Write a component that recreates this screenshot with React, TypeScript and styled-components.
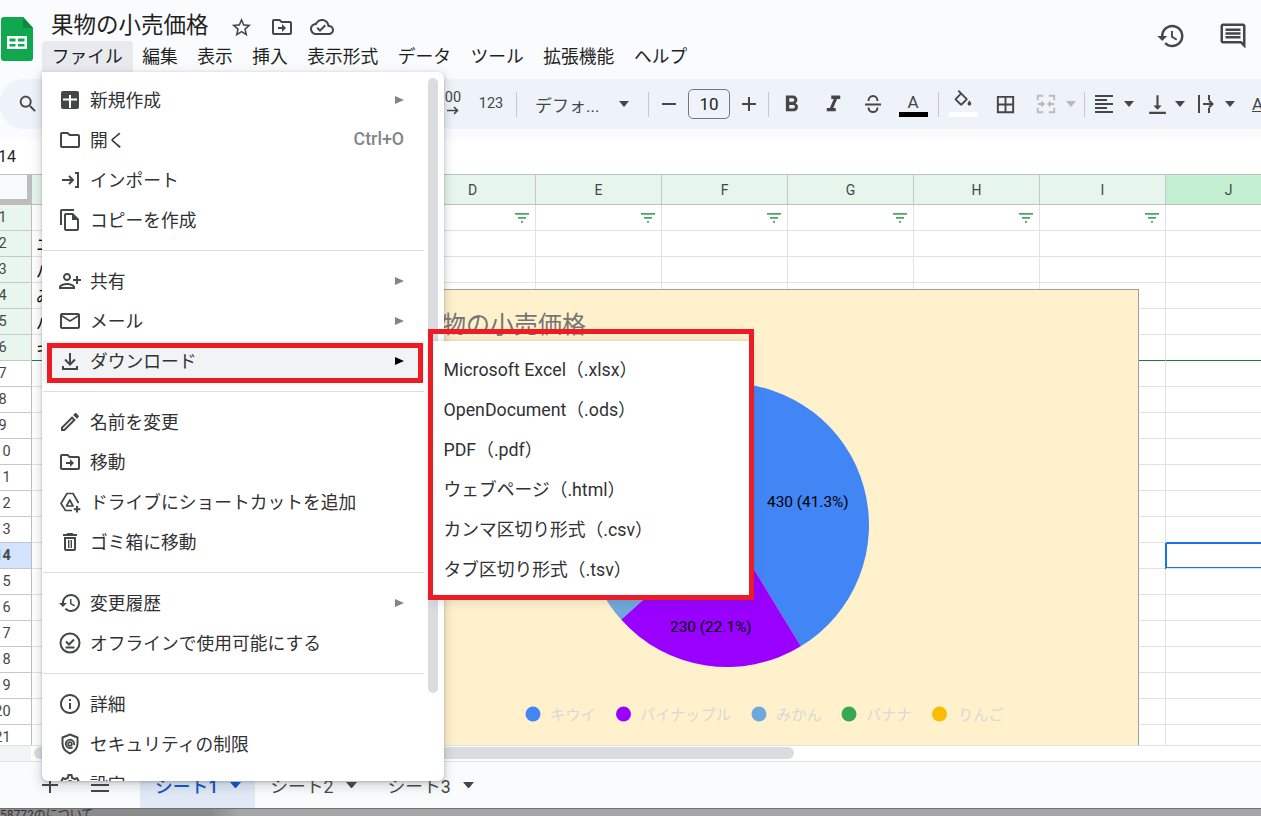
import React from 'react';
import styled, { createGlobalStyle } from 'styled-components';
import { MdFormatBold, MdFormatItalic, MdOutlineSettings } from 'react-icons/md';

const UI_FONT = `Roboto, "Noto Sans CJK JP", sans-serif`;

const Global = createGlobalStyle`
  html, body { margin: 0; padding: 0; background: #f9fbfd; overflow: hidden; }
  #root { width: 1261px; height: 816px; }
  * { box-sizing: border-box; }
`;

const Page = styled.div`
  position: relative;
  width: 1261px;
  height: 816px;
  overflow: hidden;
  display: flex;
  flex-direction: column;
  background: #f9fbfd;
  font-family: ${UI_FONT};
  color: #1f1f1f;
`;

const Header = styled.header`
  height: 79px;
  flex: none;
  display: flex;
`;
const LogoBox = styled.div`
  width: 42px;
  flex: none;
  padding: 17px 0 0 1px;
`;
const HeaderMain = styled.div`
  display: flex;
  flex-direction: column;
`;
const TitleRow = styled.div`
  height: 41px;
  padding: 9px 0 0 9px;
  display: flex;
  align-items: center;
`;
const DocTitle = styled.div`
  font-size: 22.5px;
  line-height: 30px;
  white-space: nowrap;
  margin-right: 13px;
`;
const TitleIcon = styled.span`
  width: 40px;
  height: 26px;
  margin-top: 4px;
  display: flex;
  align-items: center;
  justify-content: center;
  color: #444746;
`;
const MenuBar = styled.nav`
  height: 31px;
  display: flex;
`;
const MenuBarItem = styled.div<{ $open?: boolean }>`
  padding: 0 9.75px;
  font-size: 17.75px;
  line-height: 32px;
  white-space: nowrap;
  border-radius: 4px 4px 0 0;
  background: ${(p) => (p.$open ? '#e8eaed' : 'transparent')};
`;
const HeaderActions = styled.div`
  margin-left: auto;
  padding: 21px 13px 0 0;
  display: flex;
  gap: 32px;
  color: #444746;
`;

const Toolbar = styled.div`
  height: 50px;
  flex: none;
  display: flex;
  align-items: center;
  background: #eef2f9;
  border-radius: 24px 0 0 24px;
  color: #444746;
`;
const Slot = styled.div<{ $w: number; $muted?: boolean }>`
  width: ${(p) => p.$w}px;
  flex: none;
  display: flex;
  align-items: center;
  justify-content: center;
  color: ${(p) => (p.$muted ? '#b9babc' : '#444746')};
`;
const Sep = styled.div`
  width: 1px;
  height: 25px;
  flex: none;
  background: #c7c7c7;
`;
const ToolText = styled.span<{ $size?: number }>`
  font-size: ${(p) => p.$size ?? 14.5}px;
  line-height: 1;
  white-space: nowrap;
`;
const DecimalStack = styled.div`
  display: flex;
  flex-direction: column;
  align-items: center;
  line-height: 13px;
  margin-top: -2px;
`;
const FontPicker = styled.div`
  width: 131px;
  flex: none;
  padding-left: 18px;
  display: flex;
  align-items: center;
  font-size: 17px;
  color: #444746;
`;
const FontName = styled.span`
  width: 84px;
  white-space: nowrap;
`;
const SizeBox = styled.div`
  width: 42px;
  height: 30px;
  flex: none;
  border: 1px solid #747775;
  border-radius: 5px;
  display: flex;
  align-items: center;
  justify-content: center;
  font-size: 17px;
  color: #1f1f1f;
`;
const ColorTool = styled.div<{ $w: number }>`
  width: ${(p) => p.$w}px;
  height: 26px;
  flex: none;
  display: flex;
  flex-direction: column;
  align-items: center;
  justify-content: flex-end;
`;
const ColorGlyph = styled.div`
  height: 21px;
  font-size: 17px;
  line-height: 20px;
  display: flex;
  align-items: flex-end;
`;
const ColorBar = styled.div<{ $c: string }>`
  width: 29px;
  height: 5px;
  flex: none;
  background: ${(p) => p.$c};
`;
const ClippedA = styled.span`
  font-size: 17px;
  text-decoration: underline;
  margin-left: 14px;
`;

const Gap = styled.div`
  height: 10px;
  flex: none;
`;
const FormulaBar = styled.div`
  height: 35px;
  flex: none;
  background: #fff;
  display: flex;
  align-items: center;
  font-size: 16px;
  color: #1f1f1f;
`;
const NameBox = styled.span`
  margin-left: -2px;
`;

const Sheet = styled.section`
  position: relative;
  height: 571px;
  flex: none;
  background: #fff;
  overflow: hidden;
`;
const ColHeaderRow = styled.div`
  display: flex;
  height: 31px;
`;
const Corner = styled.div`
  width: 32px;
  height: 31px;
  flex: none;
  background: #f8f9fa;
  border-top: 1px solid #c0c0c0;
  border-right: 5px solid #bdbdbd;
  border-bottom: 6px solid #bdbdbd;
`;
const ColHead = styled.div<{ $sel?: boolean }>`
  width: 126px;
  flex: none;
  display: flex;
  align-items: center;
  justify-content: center;
  font-size: 14px;
  color: #444746;
  background: ${(p) => (p.$sel ? '#c4eed0' : '#e6f6ec')};
  border-top: 1px solid #c0c0c0;
  border-bottom: 1px solid #c0c0c0;
  border-right: 1px solid #c7c7c7;
`;
const Row = styled.div`
  display: flex;
  height: 26px;
`;
const RowHead = styled.div<{ $tone: 'plain' | 'filtered' | 'selected' }>`
  width: 58px;
  margin-left: -26px;
  flex: none;
  display: flex;
  align-items: center;
  justify-content: center;
  font-size: 14.5px;
  color: #444746;
  font-weight: ${(p) => (p.$tone === 'selected' ? 700 : 400)};
  background: ${(p) =>
    p.$tone === 'selected' ? '#d3e3fd' : p.$tone === 'filtered' ? '#e9f6ee' : '#fff'};
  border-right: 1px solid #bdbdbd;
  border-bottom: 1px solid #c7c7c7;
`;
const Cell = styled.div<{ $active?: boolean; $filterEnd?: boolean }>`
  width: 126px;
  flex: none;
  display: flex;
  align-items: center;
  justify-content: space-between;
  padding: 0 6px 0 4px;
  font-size: 16.5px;
  white-space: nowrap;
  overflow: hidden;
  color: #000;
  border-right: 1px solid #e1e1e1;
  border-bottom: 1px solid ${(p) => (p.$filterEnd ? '#188038' : '#e1e1e1')};
  box-shadow: ${(p) =>
    p.$active ? 'inset 0 0 0 1px #1a73e8, -1px 0 0 #1a73e8, 0 -1px 0 #1a73e8' : 'none'};
`;
const FilterMark = styled.svg`
  margin-left: auto;
`;

const ChartPanel = styled.div`
  position: absolute;
  left: 404px;
  top: 115px;
  width: 735px;
  height: 456px;
  background: #fff1cc;
  border-top: 1px solid #9e9e9e;
  border-right: 1px solid #9e9e9e;
`;

const HScroll = styled.div`
  height: 17px;
  flex: none;
  background: #fff;
  display: flex;
  border-top: 1px solid #e1e1e1;
  border-bottom: 1px solid #e1e1e1;
`;
const HScrollCorner = styled.div`
  width: 31px;
  flex: none;
  background: #f1f3f4;
`;
const HScrollThumb = styled.div`
  width: 760px;
  height: 12px;
  margin: 1px 0 0 3px;
  border-radius: 6px;
  background: #dadce0;
`;

const TabBar = styled.div`
  height: 46px;
  flex: none;
  padding-left: 30px;
  display: flex;
  align-items: center;
  color: #444746;
`;
const TabTool = styled.div`
  width: 40px;
  margin-right: 10px;
  display: flex;
  justify-content: center;
`;
const Tab = styled.div<{ $active?: boolean }>`
  height: 46px;
  padding: 0 ${(p) => (p.$active ? 14 : 16)}px 0 15px;
  display: flex;
  align-items: center;
  gap: 12px;
  font-size: 17.75px;
  white-space: nowrap;
  font-weight: ${(p) => (p.$active ? 500 : 400)};
  color: ${(p) => (p.$active ? '#0b57d0' : '#444746')};
  background: ${(p) => (p.$active ? '#e1e9f7' : 'transparent')};
`;
const TabGroup = styled.div`
  margin-left: 10px;
  display: flex;
`;
const BottomStrip = styled.div`
  flex: 1;
  border-top: 1px solid #6f6f6f;
  overflow: hidden;
  background: linear-gradient(90deg, #8a8a8a 0, #8a8a8a 210px, #a6a6a6 240px, #a6a6a6 100%);
  font-size: 12px;
  line-height: 12px;
  color: #333;
  white-space: nowrap;
`;

const FileMenu = styled.div`
  position: absolute;
  left: 42px;
  top: 72px;
  width: 402px;
  height: 709px;
  padding: 8px 0 0 1px;
  overflow: hidden;
  background: #fff;
  border-radius: 0 6px 6px 6px;
  box-shadow: 0 1px 3px rgba(60, 64, 67, 0.3), 0 4px 10px 3px rgba(60, 64, 67, 0.15);
  z-index: 5;
`;
const MenuList = styled.div`
  width: 381px;
`;
const MenuRow = styled.div<{ $hover?: boolean }>`
  height: 40px;
  padding: 0 20px 0 15px;
  display: flex;
  align-items: center;
  background: ${(p) => (p.$hover ? '#f1f3f4' : 'transparent')};
`;
const MenuIcon = styled.span`
  width: 24px;
  height: 24px;
  flex: none;
  margin-right: 8px;
  display: flex;
  align-items: center;
  justify-content: center;
  color: #444746;
`;
const MenuLabel = styled.span`
  font-size: 17.75px;
  padding-bottom: 2px;
  white-space: nowrap;
  color: #2f3133;
`;
const Shortcut = styled.span`
  margin-left: auto;
  font-size: 17.75px;
  font-weight: 500;
  padding-bottom: 2px;
  color: #80868b;
`;
const SubArrow = styled.span<{ $dark?: boolean }>`
  margin-left: auto;
  width: 0;
  height: 0;
  border-left: 9px solid ${(p) => (p.$dark ? '#000' : '#80868b')};
  border-top: 4px solid transparent;
  border-bottom: 4px solid transparent;
`;
const MenuDivider = styled.div`
  height: 1px;
  margin: 10px 0;
  background: #dadce0;
`;
const MenuScrollThumb = styled.div`
  position: absolute;
  left: 386px;
  top: 6px;
  width: 10px;
  height: 615px;
  border-radius: 5px;
  background: #dadce0;
`;

const SubMenu = styled.div`
  position: absolute;
  left: 433px;
  top: 341px;
  width: 316px;
  height: 254px;
  padding-top: 8px;
  background: #fff;
  box-shadow: 0 1px 3px rgba(60, 64, 67, 0.3), 0 4px 10px 3px rgba(60, 64, 67, 0.15);
  z-index: 6;
`;
const SubRow = styled.div`
  height: 40px;
  padding: 0 0 2px 10.5px;
  display: flex;
  align-items: center;
  font-size: 17.75px;
  white-space: nowrap;
  color: #2f3133;
`;
const RedFrame = styled.div<{ $x: number; $y: number; $w: number; $h: number }>`
  position: absolute;
  left: ${(p) => p.$x}px;
  top: ${(p) => p.$y}px;
  width: ${(p) => p.$w}px;
  height: ${(p) => p.$h}px;
  border: 5px solid #ed1c24;
  z-index: 7;
  pointer-events: none;
`;

const P = ({ d, size = 24, flip }: { d: string; size?: number; flip?: boolean }) => (
  <svg width={size} height={size} viewBox="0 0 24 24" fill="currentColor" style={flip ? { transform: 'scaleX(-1)' } : undefined}>
    <path d={d} />
  </svg>
);
const S = ({ children, size = 24 }: { children: React.ReactNode; size?: number }) => (
  <svg width={size} height={size} viewBox="0 0 24 24" fill="none" stroke="currentColor" strokeWidth={2}>
    {children}
  </svg>
);
const Caret = ({ c = '#444746', w = 10 }: { c?: string; w?: number }) => (
  <svg width={w} height={w * 0.6} viewBox="0 0 10 6" style={{ flex: 'none' }}>
    <path d="M0 0h10L5 6z" fill={c} />
  </svg>
);

const D = {
  star: 'M22 9.24l-7.19-.62L12 2 9.19 8.63 2 9.24l5.46 4.73L5.82 21 12 17.27 18.18 21l-1.63-7.03L22 9.24zM12 15.4l-3.76 2.27 1-4.28-3.32-2.88 4.38-.38L12 6.1l1.71 4.04 4.38.38-3.32 2.88 1 4.28L12 15.4z',
  move: 'M20 6h-8l-2-2H4c-1.1 0-2 .9-2 2v12c0 1.1.9 2 2 2h16c1.1 0 2-.9 2-2V8c0-1.1-.9-2-2-2zm0 12H4V6h5.17l2 2H20v10zm-8-4H8v-2h4V9l4 4-4 4v-3z',
  cloud: 'M19.35 10.04C18.67 6.59 15.64 4 12 4 9.11 4 6.6 5.64 5.35 8.04 2.34 8.36 0 10.91 0 14c0 3.31 2.69 6 6 6h13c2.76 0 5-2.24 5-5 0-2.64-2.05-4.78-4.65-4.96zM19 18H6c-2.21 0-4-1.79-4-4 0-2.05 1.53-3.76 3.56-3.97l1.07-.11.5-.95C8.08 7.14 9.94 6 12 6c2.62 0 4.88 1.86 5.39 4.43l.3 1.5 1.53.11c1.56.1 2.78 1.41 2.78 2.96 0 1.65-1.35 3-3 3zm-9-3.82l-2.09-2.09L6.5 13.5 10 17l6.01-6.01-1.41-1.41z',
  history: 'M13 3c-4.97 0-9 4.03-9 9H1l3.89 3.89.07.14L9 12H6c0-3.87 3.13-7 7-7s7 3.13 7 7-3.13 7-7 7c-1.93 0-3.68-.79-4.94-2.06l-1.42 1.42C8.27 19.99 10.51 21 13 21c4.97 0 9-4.03 9-9s-4.03-9-9-9zm-1 5v5l4.28 2.54.72-1.21-3.5-2.08V8H12z',
  comment: 'M20 2H4c-1.1 0-2 .9-2 2v12c0 1.1.9 2 2 2h14l4 4V4c0-1.1-.9-2-2-2zm0 15.17L18.83 16H4V4h16v13.17zM6 12h12v2H6zm0-3h12v2H6zm0-3h12v2H6z',
  search: 'M15.5 14h-.79l-.28-.27C15.41 12.59 16 11.11 16 9.5 16 5.91 13.09 3 9.5 3S3 5.91 3 9.5 5.91 16 9.5 16c1.61 0 3.09-.59 4.23-1.57l.27.28v.79l5 4.99L20.49 19l-4.99-5zm-6 0C7.01 14 5 11.99 5 9.5S7.01 5 9.5 5 14 7.01 14 9.5 11.99 14 9.5 14z',
  fill: 'M16.56 8.94L7.62 0 6.21 1.41l2.38 2.38-5.15 5.15c-.59.59-.59 1.54 0 2.12l5.5 5.5c.29.29.68.44 1.06.44s.77-.15 1.06-.44l5.5-5.5c.59-.58.59-1.53 0-2.12zM5.21 10L10 5.21 14.79 10H5.21zM19 11.5s-2 2.17-2 3.5c0 1.1.9 2 2 2s2-.9 2-2c0-1.33-2-3.5-2-3.5z M5.21 10h9.58L10 14.8z',
  borders: 'M3 3v18h18V3H3zm8 16H5v-6h6v6zm0-8H5V5h6v6zm8 8h-6v-6h6v6zm0-8h-6V5h6v6z',
  align: 'M15 15H3v2h12v-2zm0-8H3v2h12V7zM3 13h18v-2H3v2zm0 8h18v-2H3v2zM3 3v2h18V3H3z',
  valign: 'M16 13h-3V3h-2v10H8l4 4 4-4zM4 19v2h16v-2H4z',
  folder: 'M9.17 6l2 2H20v10H4V6h5.17M10 4H4c-1.1 0-1.99.9-1.99 2L2 18c0 1.1.9 2 2 2h16c1.1 0 2-.9 2-2V8c0-1.1-.9-2-2-2h-8l-2-2z',
  copy: 'M16 1H4c-1.1 0-2 .9-2 2v14h2V3h12V1zM15 5H8c-1.1 0-2 .9-2 2v14c0 1.1.9 2 2 2h11c1.1 0 2-.9 2-2V11l-6-6zM8 21V7h6v5h5v9H8z',
  person: 'M15 12c2.21 0 4-1.79 4-4s-1.79-4-4-4-4 1.79-4 4 1.79 4 4 4zm0-6c1.1 0 2 .9 2 2s-.9 2-2 2-2-.9-2-2 .9-2 2-2zm0 8c-2.67 0-8 1.34-8 4v2h16v-2c0-2.66-5.33-4-8-4zm-6 4c.22-.72 3.31-2 6-2 2.7 0 5.8 1.29 6 2H9zm-3-3v-3h3v-2H6V7H4v3H1v2h3v3h2z',
  mail: 'M22 6c0-1.1-.9-2-2-2H4c-1.1 0-2 .9-2 2v12c0 1.1.9 2 2 2h16c1.1 0 2-.9 2-2V6zm-2 0l-8 5-8-5h16zm0 12H4V8l8 5 8-5v10z',
  edit: 'M3 17.25V21h3.75L17.81 9.94l-3.75-3.75L3 17.25zM5.92 19H5v-.92l9.06-9.06.92.92L5.92 19zM20.71 5.63l-2.34-2.34c-.39-.39-1.02-.39-1.41 0l-1.83 1.83 3.75 3.75 1.83-1.83c.39-.39.39-1.02 0-1.41z',
  trash: 'M16 9v10H8V9h8m-1.5-6h-5l-1 1H5v2h14V4h-3.5l-1-1zM18 7H6v12c0 1.1.9 2 2 2h8c1.1 0 2-.9 2-2V7zM10 10h1.4v8H10zM12.6 10H14v8h-1.4z',
  info: 'M11 7h2v2h-2zm0 4h2v6h-2zm1-9C6.48 2 2 6.48 2 12s4.48 10 10 10 10-4.48 10-10S17.52 2 12 2zm0 18c-4.41 0-8-3.59-8-8s3.59-8 8-8 8 3.59 8 8-3.59 8-8 8z',
};

const NewIcon = () => (
  <svg width="24" height="24" viewBox="0 0 24 24">
    <rect x="3" y="3" width="18" height="18" rx="2" fill="#444746" />
    <path d="M12 7v13M5 11.5h14" stroke="#fff" strokeWidth="2" fill="none" />
  </svg>
);
const ImportIcon = () => (
  <S>
    <path d="M4 12h11M11 8l4 4-4 4M17 5h3v14h-3" />
  </S>
);
const DownloadIcon = () => (
  <S>
    <path d="M12 4v11M7 10.5l5 5 5-5M5 17v3h14v-3" />
  </S>
);
const DriveAddIcon = () => (
  <svg width="24" height="24" viewBox="0 0 24 24" fill="none" stroke="currentColor" strokeWidth={1.7}>
    <path d="M20.500 13L15 3.500H9L3 13.500l4.500 7H14" strokeLinejoin="round" />
    <path d="M8.500 16h6.500L11.800 10z" strokeLinejoin="round" />
    <path d="M19 16v6.500M15.800 19.300h6.500" strokeWidth={2} />
  </svg>
);
const OfflineIcon = () => (
  <S>
    <circle cx="12" cy="12" r="9.5" />
    <path d="M8 10.500l3 3 5-5M7.500 16.500h9" />
  </S>
);
const ShieldIcon = () => (
  <S>
    <path d="M12 2.500l7.500 3v6c0 4.500-3 8-7.500 10-4.500-2-7.500-5.500-7.500-10v-6z" />
    <path d="M14.600 15.200A4.200 4.200 0 1 1 16.200 12v1.200" strokeWidth={1.800} />
    <circle cx="12" cy="12" r="1.800" strokeWidth={1.800} />
  </S>
);
const StrikeIcon = () => (
  <svg width="24" height="24" viewBox="0 0 24 24" fill="none" stroke="currentColor" strokeWidth={2}>
    <path d="M7.500 9c0-3 2-5 4.500-5s4.500 2 4.500 5M4 12.500h16M7.500 15.500c0 2.500 2 4.500 4.500 4.500s4.500-2 4.500-4.500" />
  </svg>
);

type MenuEntry =
  | { kind: 'div' }
  | { kind: 'item'; label: string; icon: React.ReactNode; arrow?: boolean; hover?: boolean; shortcut?: string };

const item = (
  label: string,
  icon: React.ReactNode,
  extra: { arrow?: boolean; hover?: boolean; shortcut?: string } = {},
): MenuEntry => ({ kind: 'item', label, icon, ...extra });
const divider: MenuEntry = { kind: 'div' };

const MENU: MenuEntry[] = [
  item('新規作成', <NewIcon />, { arrow: true }),
  item('開く', <P d={D.folder} />, { shortcut: 'Ctrl+O' }),
  item('インポート', <ImportIcon />),
  item('コピーを作成', <P d={D.copy} />),
  divider,
  item('共有', <P d={D.person} flip />, { arrow: true }),
  item('メール', <P d={D.mail} />, { arrow: true }),
  item('ダウンロード', <DownloadIcon />, { arrow: true, hover: true }),
  divider,
  item('名前を変更', <P d={D.edit} />),
  item('移動', <P d={D.move} />),
  item('ドライブにショートカットを追加', <DriveAddIcon />),
  item('ゴミ箱に移動', <P d={D.trash} size={26} />),
  divider,
  item('変更履歴', <P d={D.history} />, { arrow: true }),
  item('オフラインで使用可能にする', <OfflineIcon />),
  divider,
  item('詳細', <P d={D.info} />),
  item('セキュリティの制限', <ShieldIcon />),
  item('設定', <MdOutlineSettings size={24} />),
];

const DOWNLOADS = [
  'Microsoft Excel（.xlsx）',
  'OpenDocument（.ods）',
  'PDF（.pdf）',
  'ウェブページ（.html）',
  'カンマ区切り形式（.csv）',
  'タブ区切り形式（.tsv）',
];
const MENUBAR = ['ファイル', '編集', '表示', '挿入', '表示形式', 'データ', 'ツール', '拡張機能', 'ヘルプ'];
const COLS = ['A', 'B', 'C', 'D', 'E', 'F', 'G', 'H', 'I', 'J'];
const FIRST_COL: Record<number, string> = { 2: 'ニンジン', 3: 'パイナップル', 4: 'みかん', 5: 'バナナ', 6: 'キウイ' };

const SLICES = [
  { v: 41.3, c: '#4285f4' },
  { v: 22.1, c: '#9900ff' },
  { v: 15.4, c: '#6fa8dc' },
  { v: 12.0, c: '#34a853' },
  { v: 9.2, c: '#fbbc04' },
];
const LEGEND = [
  { c: '#4285f4', t: 'キウイ', dot: 129, x: 146 },
  { c: '#9900ff', t: 'パイナップル', dot: 219.5, x: 236 },
  { c: '#6fa8dc', t: 'みかん', dot: 355, x: 372 },
  { c: '#34a853', t: 'バナナ', dot: 445, x: 462 },
  { c: '#fbbc04', t: 'りんご', dot: 535.5, x: 554 },
];

const slicePaths = () => {
  const cx = 323, cy = 235, r = 142;
  let acc = 0;
  return SLICES.map((s) => {
    const a0 = (acc / 100) * 2 * Math.PI;
    acc += s.v;
    const a1 = (acc / 100) * 2 * Math.PI;
    const p = (a: number) => `${(cx + r * Math.sin(a)).toFixed(2)} ${(cy - r * Math.cos(a)).toFixed(2)}`;
    return { c: s.c, d: `M${cx} ${cy}L${p(a0)}A${r} ${r} 0 ${s.v > 50 ? 1 : 0} 1 ${p(a1)}Z` };
  });
};

const Chart = () => (
  <ChartPanel>
    <svg width="734" height="455" viewBox="0 0 734 455">
      <text x="14" y="43" fontSize="24" fill="#757575" fontFamily={UI_FONT}>
        果物の小売価格
      </text>
      {slicePaths().map((s) => (
        <path key={s.c} d={s.d} fill={s.c} />
      ))}
      <g fontFamily={UI_FONT} fontSize="15.400" fill="#000">
        <text x="363" y="217">430 (41.3%)</text>
        <text x="266" y="342">230 (22.1%)</text>
      </g>
      {LEGEND.map((l) => (
        <g key={l.t}>
          <circle cx={l.dot} cy="424" r="7.500" fill={l.c} />
          <text x={l.x} y="429.500" fontSize="15.200" fill="#d8d8d8" fontFamily={UI_FONT}>
            {l.t}
          </text>
        </g>
      ))}
    </svg>
  </ChartPanel>
);

const FilterIcon = () => (
  <FilterMark width="14" height="10" viewBox="0 0 14 10">
    <path d="M0 0h14v1.800H0zM3 4h8v1.800H3zM6 8h2v1.800H6z" fill="#4ca56b" />
  </FilterMark>
);

const SheetGrid = () => (
  <Sheet>
    <ColHeaderRow>
      <Corner />
      {COLS.map((c) => (
        <ColHead key={c} $sel={c === 'J'}>
          {c}
        </ColHead>
      ))}
    </ColHeaderRow>
    {Array.from({ length: 21 }, (_, i) => i + 1).map((n) => (
      <Row key={n}>
        <RowHead $tone={n === 14 ? 'selected' : n <= 6 ? 'filtered' : 'plain'}>{n}</RowHead>
        {COLS.map((c) => (
          <Cell key={c} $active={c === 'J' && n === 14} $filterEnd={n === 6}>
            {c === 'A' && FIRST_COL[n]}
            {n === 1 && c !== 'J' && <FilterIcon />}
          </Cell>
        ))}
      </Row>
    ))}
    <Chart />
  </Sheet>
);

const ToolbarRow = () => (
  <Toolbar>
    <Slot $w={56}>
      <P d={D.search} size={22} />
    </Slot>
    <Slot $w={384} />
    <Slot $w={26}>
      <DecimalStack>
        <ToolText>00</ToolText>
        <svg width="14" height="9" viewBox="0 0 14 9">
          <path d="M1 4.500h10M8 1l3.500 3.500L8 8" stroke="currentColor" strokeWidth="1.600" fill="none" />
        </svg>
      </DecimalStack>
    </Slot>
    <Slot $w={50}>
      <ToolText>123</ToolText>
    </Slot>
    <Sep />
    <FontPicker>
      <FontName>デフォ...</FontName>
      <Caret />
    </FontPicker>
    <Sep />
    <Slot $w={39}>
      <svg width="14" height="2"><rect width="14" height="2" fill="currentColor" /></svg>
    </Slot>
    <SizeBox>10</SizeBox>
    <Slot $w={38}>
      <svg width="14" height="14"><path d="M6 0h2v6h6v2H8v6H6V8H0V6h6z" fill="currentColor" /></svg>
    </Slot>
    <Sep />
    <Slot $w={44}>
      <MdFormatBold size={27} />
    </Slot>
    <Slot $w={40}>
      <MdFormatItalic size={27} />
    </Slot>
    <Slot $w={40}>
      <StrikeIcon />
    </Slot>
    <ColorTool $w={40}>
      <ColorGlyph>A</ColorGlyph>
      <ColorBar $c="#000" />
    </ColorTool>
    <Slot $w={5} />
    <Sep />
    <ColorTool $w={48}>
      <ColorGlyph>
        <P d={D.fill} size={22} />
      </ColorGlyph>
      <ColorBar $c="#fff" />
    </ColorTool>
    <Slot $w={36}>
      <P d={D.borders} size={23} />
    </Slot>
    <Slot $w={5} />
    <Slot $w={36} $muted>
      <svg width="22" height="22" viewBox="0 0 24 24" fill="none" stroke="currentColor" strokeWidth="2">
        <path d="M3 8V3h6M15 3h6v5M3 16v5h6M15 21h6v-5M3 12h6M7 9.500l2.500 2.500L7 14.500M21 12h-6M17 9.500L14.500 12l2.500 2.500" />
      </svg>
    </Slot>
    <Slot $w={14}>
      <Caret c="#b9babc" />
    </Slot>
    <Slot $w={6} />
    <Sep />
    <Slot $w={37}>
      <P d={D.align} size={24} />
    </Slot>
    <Slot $w={14}>
      <Caret />
    </Slot>
    <Slot $w={6} />
    <Slot $w={30}>
      <P d={D.valign} size={25} />
    </Slot>
    <Slot $w={16}>
      <Caret />
    </Slot>
    <Slot $w={34}>
      <svg width="26" height="26" viewBox="0 0 26 26" fill="none" stroke="currentColor" strokeWidth="2">
        <path d="M7 4v18M17 4v5M17 17v5M11 13h9M17 9.500l3.500 3.500-3.500 3.500" />
      </svg>
    </Slot>
    <Slot $w={16}>
      <Caret />
    </Slot>
    <ClippedA>A</ClippedA>
  </Toolbar>
);

export default function App() {
  return (
    <Page>
      <Global />
      <Header>
        <LogoBox>
          <svg width="32" height="44" viewBox="0 0 32 44">
            <path d="M3 0h19l10 11v30a3 3 0 0 1-3 3H3a3 3 0 0 1-3-3V3a3 3 0 0 1 3-3z" fill="#0fa84e" />
            <path d="M22 0l10 11H22z" fill="#0b8a3e" />
            <path d="M6 19h20v13H6zM8.500 21.500v3h6v-3zm8.500 0v3h6.500v-3zM8.500 27v2.500h6V27zm8.500 0v2.500h6.500V27z" fill="#fff" fillRule="evenodd" />
          </svg>
        </LogoBox>
        <HeaderMain>
          <TitleRow>
            <DocTitle>果物の小売価格</DocTitle>
            <TitleIcon>
              <P d={D.star} size={23} />
            </TitleIcon>
            <TitleIcon>
              <P d={D.move} size={24} />
            </TitleIcon>
            <TitleIcon>
              <P d={D.cloud} size={24} />
            </TitleIcon>
          </TitleRow>
          <MenuBar>
            {MENUBAR.map((m, i) => (
              <MenuBarItem key={m} $open={i === 0}>
                {m}
              </MenuBarItem>
            ))}
          </MenuBar>
        </HeaderMain>
        <HeaderActions>
          <P d={D.history} size={30} />
          <P d={D.comment} size={30} />
        </HeaderActions>
      </Header>

      <ToolbarRow />
      <Gap />
      <FormulaBar>
        <NameBox>14</NameBox>
      </FormulaBar>
      <SheetGrid />
      <HScroll>
        <HScrollCorner />
        <HScrollThumb />
      </HScroll>
      <TabBar>
        <TabTool>
          <svg width="16" height="16"><path d="M7 0h2v7h7v2H9v7H7V9H0V7h7z" fill="currentColor" /></svg>
        </TabTool>
        <TabTool>
          <svg width="18" height="14"><path d="M0 0h18v2H0zM0 6h18v2H0zM0 12h18v2H0z" fill="currentColor" /></svg>
        </TabTool>
        <TabGroup>
          <Tab $active>
            シート1
            <Caret c="#0b57d0" w={11} />
          </Tab>
          <Tab>
            シート2
            <Caret w={11} />
          </Tab>
          <Tab>
            シート3
            <Caret w={11} />
          </Tab>
        </TabGroup>
      </TabBar>
      <BottomStrip>58772のについて</BottomStrip>

      <FileMenu>
        <MenuList>
          {MENU.map((m, i) =>
            m.kind === 'div' ? (
              <MenuDivider key={i} />
            ) : (
              <MenuRow key={m.label} $hover={m.hover}>
                <MenuIcon>{m.icon}</MenuIcon>
                <MenuLabel>{m.label}</MenuLabel>
                {m.shortcut && <Shortcut>{m.shortcut}</Shortcut>}
                {m.arrow && <SubArrow $dark={m.hover} />}
              </MenuRow>
            ),
          )}
        </MenuList>
        <MenuScrollThumb />
      </FileMenu>

      <SubMenu>
        {DOWNLOADS.map((d) => (
          <SubRow key={d}>{d}</SubRow>
        ))}
      </SubMenu>

      <RedFrame $x={47} $y={343} $w={376} $h={40} />
      <RedFrame $x={428} $y={329} $w={326} $h={271} />
    </Page>
  );
}
